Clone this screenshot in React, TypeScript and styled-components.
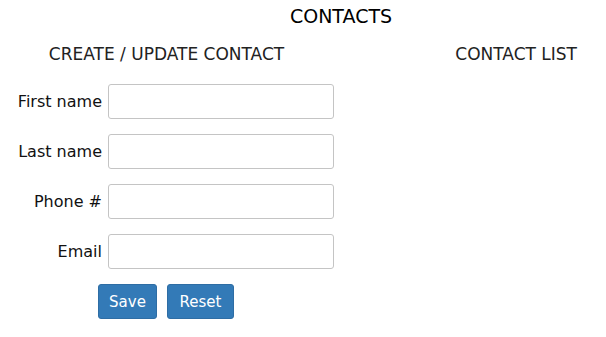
import React from "react";
import styled, { createGlobalStyle } from "styled-components";

const Global = createGlobalStyle`
  html, body { margin: 0; padding: 0; background: #fff; }
  body { font-family: "DejaVu Sans", sans-serif; color: #111; }
`;

const Page = styled.div`
  width: 100%;
  padding-top: 4px;
`;

const Title = styled.h1`
  margin: 0;
  padding-left: 76px;
  text-align: center;
  font-size: 19px;
  font-weight: 400;
  line-height: 24px;
  color: #000;
`;

const Columns = styled.div`
  display: grid;
  grid-template-columns: 333px 1fr;
  margin-top: 15px;
`;

const Column = styled.section<{ $align?: string }>`
  display: flex;
  flex-direction: column;
  align-items: ${(p) => p.$align ?? "center"};
`;

const Heading = styled.h2<{ $padRight?: number }>`
  margin: 0;
  padding-right: ${(p) => p.$padRight ?? 0}px;
  font-size: 17px;
  font-weight: 400;
  line-height: 22px;
  color: #222;
  white-space: nowrap;
`;

const Form = styled.form`
  display: flex;
  flex-direction: column;
  gap: 15px;
  margin-top: 19px;
  width: 100%;
`;

const Row = styled.div`
  display: grid;
  grid-template-columns: 102px 226px;
  column-gap: 6px;
  align-items: center;
`;

const Label = styled.label`
  text-align: right;
  font-size: 16px;
  font-weight: 400;
  color: #111;
  white-space: nowrap;
`;

const Input = styled.input`
  box-sizing: border-box;
  width: 226px;
  height: 35px;
  border: 1px solid #c4c4c4;
  border-radius: 3px;
  outline: none;
  padding: 0 8px;
  font: inherit;
`;

const Buttons = styled.div`
  display: flex;
  gap: 10px;
  margin-left: 98px;
`;

const Button = styled.button<{ $w: number }>`
  box-sizing: border-box;
  width: ${(p) => p.$w}px;
  height: 35px;
  padding: 0;
  background: #337ab7;
  color: #fff;
  border: 1px solid #2e6da4;
  border-radius: 3px;
  font-family: inherit;
  font-size: 15px;
  font-weight: 400;
  cursor: pointer;
`;

const fields = [
  { id: "first", label: "First name" },
  { id: "last", label: "Last name" },
  { id: "phone", label: "Phone #" },
  { id: "email", label: "Email" },
];

export default function App() {
  return (
    <>
      <Global />
      <Page>
        <Title>CONTACTS</Title>
        <Columns>
          <Column>
            <Heading>CREATE / UPDATE CONTACT</Heading>
            <Form onSubmit={(e) => e.preventDefault()}>
              {fields.map((f) => (
                <Row key={f.id}>
                  <Label htmlFor={f.id}>{f.label}</Label>
                  <Input id={f.id} type="text" />
                </Row>
              ))}
              <Buttons>
                <Button type="submit" $w={59}>Save</Button>
                <Button type="reset" $w={67}>Reset</Button>
              </Buttons>
            </Form>
          </Column>
          <Column $align="flex-end">
            <Heading $padRight={29}>CONTACT LIST</Heading>
          </Column>
        </Columns>
      </Page>
    </>
  );
}
